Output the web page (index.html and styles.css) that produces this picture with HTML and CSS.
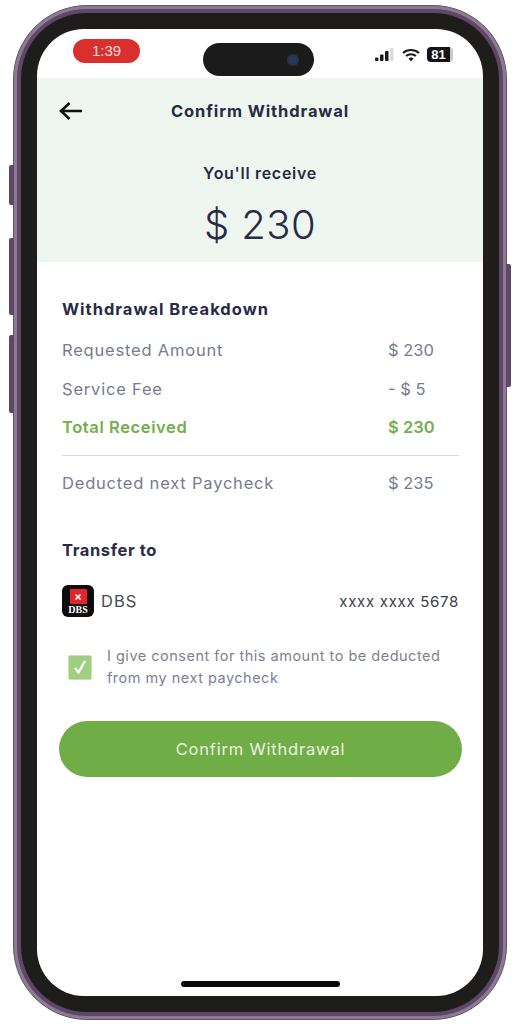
FILE: index.html
```html
<!DOCTYPE html>
<html lang="en">
<head>
    <meta charset="UTF-8">
    <meta name="viewport" content="width=device-width, initial-scale=1.0">
    <title>Confirm Withdrawal</title>
    <link rel="stylesheet" href="styles.css">
</head>
<body>
    <div class="phone">
        <span class="side-btn side-btn-mute"></span>
        <span class="side-btn side-btn-up"></span>
        <span class="side-btn side-btn-down"></span>
        <span class="side-btn side-btn-power"></span>
        <div class="phone-band">
            <div class="bezel">
                <div class="screen">
                    <div class="status-bar">
                        <span class="time-pill">1:39</span>
                        <div class="island"><span class="camera"></span></div>
                        <div class="status-icons">
                            <svg width="20" height="14" viewBox="0 0 20 14">
                                <rect x="0" y="9.500" width="3.500" height="3.500" rx="1" fill="#1b1b1b"/>
                                <rect x="5" y="6.500" width="3.500" height="6.500" rx="1" fill="#1b1b1b"/>
                                <rect x="10" y="3" width="3.500" height="10" rx="1" fill="#1b1b1b"/>
                                <rect x="15" y="0" width="3.500" height="13" rx="1" fill="#dcdcdc"/>
                            </svg>
                            <svg width="18" height="14" viewBox="0 0 18 14">
                                <path d="M1 5 C5.500 1 12.500 1 17 5" fill="none" stroke="#1b1b1b" stroke-width="2"/>
                                <path d="M4 8 C6.800 5.600 11.200 5.600 14 8" fill="none" stroke="#1b1b1b" stroke-width="2"/>
                                <path d="M6.500 10.500 L9 13.500 L11.500 10.500 C10 9.300 8 9.300 6.500 10.500 Z" fill="#1b1b1b"/>
                            </svg>
                            <span class="battery">81</span>
                        </div>
                    </div>

                    <div class="summary">
                        <div class="nav-row">
                            <svg class="back-arrow" width="24" height="20" viewBox="0 0 24 20">
                                <path d="M23 10 H2 M10.500 2 L2 10 L10.500 18" fill="none" stroke="#111" stroke-width="2.600"/>
                            </svg>
                            <h1>Confirm Withdrawal</h1>
                        </div>
                        <p class="receive-label">You'll receive</p>
                        <p class="receive-amount">$ 230</p>
                    </div>

                    <div class="content">
                        <h2>Withdrawal Breakdown</h2>
                        <div class="breakdown">
                            <div class="row"><span class="row-label">Requested Amount</span><span>$ 230</span></div>
                            <div class="row"><span class="row-label">Service Fee</span><span>- $ 5</span></div>
                            <div class="row row-total"><span class="row-label">Total Received</span><span>$ 230</span></div>
                        </div>
                        <div class="row row-deducted"><span class="row-label">Deducted next Paycheck</span><span>$ 235</span></div>

                        <h2 class="transfer-title">Transfer to</h2>
                        <div class="bank-row">
                            <div class="bank-logo">
                                <span class="bank-mark">
                                    <svg width="10" height="10" viewBox="0 0 12 12">
                                        <path d="M3 3 L9 9 M9 3 L3 9" stroke="#fff" stroke-width="2"/>
                                    </svg>
                                </span>
                                <span class="bank-logo-text">DBS</span>
                            </div>
                            <span class="bank-name">DBS</span>
                            <span class="bank-account">xxxx xxxx 5678</span>
                        </div>

                        <div class="consent">
                            <span class="checkbox">
                                <svg width="14" height="16" viewBox="0 0 14 16">
                                    <path d="M2 9 L5.500 13.500 L12 2" fill="none" stroke="#fff" stroke-width="2.200"/>
                                </svg>
                            </span>
                            <p>I give consent for this amount to be deducted from my next paycheck</p>
                        </div>

                        <button class="confirm-btn">Confirm Withdrawal</button>
                    </div>

                    <div class="home-bar"></div>
                </div>
            </div>
        </div>
    </div>
</body>
</html>
```

FILE: styles.css
```css
* {
    box-sizing: border-box;
}

body {
    font-family: Inter, "Open Sans", sans-serif;
    margin: 0;
    padding: 5px 13px 4px;
    background-color: #fff;
    color: #272b45;
}

/* Phone frame */
.phone {
    position: relative;
    height: 1015px;
    padding: 3px;
    background-color: #8b7b92;
    border: 1px solid #66536c;
    border-radius: 74px;
}

.phone-band {
    height: 100%;
    padding: 4px;
    background-color: #5f4766;
    border-radius: 70px;
}

.bezel {
    height: 100%;
    padding: 16px;
    background-color: #1f1d1c;
    border-radius: 66px;
}

.screen {
    position: relative;
    display: flex;
    flex-direction: column;
    height: 100%;
    overflow: hidden;
    background-color: #fff;
    border-radius: 47px;
}

.side-btn {
    position: absolute;
    width: 5px;
    background-color: #5f4766;
}

.side-btn-mute {
    left: -5px;
    top: 159px;
    height: 40px;
    border-radius: 2px 0 0 2px;
}

.side-btn-up {
    left: -5px;
    top: 232px;
    height: 77px;
    border-radius: 2px 0 0 2px;
}

.side-btn-down {
    left: -5px;
    top: 329px;
    height: 78px;
    border-radius: 2px 0 0 2px;
}

.side-btn-power {
    right: -5px;
    top: 258px;
    height: 123px;
    border-radius: 0 2px 2px 0;
}

/* Status bar */
.status-bar {
    position: relative;
    display: flex;
    justify-content: space-between;
    align-items: flex-start;
    flex-shrink: 0;
    height: 49px;
    padding: 10px 30px 0 36px;
}

.time-pill {
    width: 67px;
    height: 24px;
    background-color: #d9302e;
    border-radius: 12px;
    color: #f6dcdc;
    font-family: "Liberation Sans", sans-serif;
    font-size: 15px;
    line-height: 24px;
    text-align: center;
}

.island {
    position: absolute;
    left: 166px;
    top: 14px;
    width: 111px;
    height: 33px;
    background-color: #1c1b1b;
    border-radius: 17px;
}

.camera {
    position: absolute;
    right: 15px;
    top: 11px;
    width: 12px;
    height: 12px;
    background-color: #26356a;
    border: 2px solid #33343a;
    border-radius: 50%;
}

.status-icons {
    display: flex;
    align-items: center;
    gap: 7px;
    margin-top: 8px;
}

.battery {
    width: 26px;
    height: 15px;
    padding-right: 3px;
    background: linear-gradient(to right, #141414 23px, #c9c9c9 23px);
    border-radius: 4px;
    color: #fff;
    font-family: "Liberation Sans", sans-serif;
    font-size: 13px;
    font-weight: 700;
    line-height: 15px;
    text-align: center;
}

/* Green summary */
.summary {
    flex-shrink: 0;
    height: 184px;
    padding-top: 22px;
    background-color: #eff5ef;
    text-align: center;
}

.nav-row {
    position: relative;
    height: 22px;
}

.back-arrow {
    position: absolute;
    left: 22px;
    top: 1px;
}

h1 {
    margin: 0;
    font-size: 16.500px;
    font-weight: 700;
    letter-spacing: 0.9px;
    line-height: 22px;
}

.receive-label {
    margin: 39px 0 0;
    font-size: 16px;
    font-weight: 600;
    letter-spacing: 0.7px;
    line-height: 24px;
}

.receive-amount {
    margin: 16px 0 0;
    font-size: 40px;
    font-weight: 300;
    letter-spacing: 0.4px;
    line-height: 48px;
}

/* Details */
.content {
    padding: 36px 24px 0 25px;
}

h2 {
    margin: 0;
    font-size: 16.500px;
    font-weight: 700;
    letter-spacing: 1px;
    line-height: 22px;
}

.breakdown {
    display: flex;
    flex-direction: column;
    gap: 16.500px;
    margin-top: 19px;
    padding-bottom: 17px;
    border-bottom: 1px solid #d9dbe0;
}

.row {
    display: grid;
    grid-template-columns: 1fr 71px;
    color: #767c92;
    font-size: 16.500px;
    line-height: 22px;
}

.row-label {
    letter-spacing: 0.8px;
}

.row-total {
    color: #73ae4c;
    font-weight: 600;
}

.row-total .row-label {
    letter-spacing: 0.6px;
}

.row-deducted {
    margin-top: 16px;
}

.transfer-title {
    margin-top: 45px;
    letter-spacing: 0.6px;
}

.bank-row {
    display: flex;
    align-items: center;
    margin-top: 24px;
}

.bank-logo {
    display: flex;
    flex-direction: column;
    align-items: center;
    width: 32px;
    height: 32px;
    padding-top: 4px;
    background-color: #0c0c0c;
    border-radius: 6px;
}

.bank-mark {
    display: flex;
    justify-content: center;
    align-items: center;
    width: 17px;
    height: 15px;
    background-color: #e0262c;
}

.bank-logo-text {
    color: #fff;
    font-family: "Liberation Serif", serif;
    font-size: 10px;
    font-weight: 700;
    line-height: 11px;
}

.bank-name {
    margin-left: 7px;
    color: #4a4c55;
    font-size: 16.500px;
    letter-spacing: 1px;
}

.bank-account {
    margin-left: auto;
    color: #3b3d48;
    font-size: 15px;
    letter-spacing: 0.7px;
}

.consent {
    display: flex;
    align-items: center;
    gap: 15px;
    margin-top: 28px;
    padding-left: 6px;
}

.checkbox {
    display: flex;
    flex-shrink: 0;
    justify-content: center;
    align-items: center;
    width: 24px;
    height: 25px;
    background-color: #a0d07f;
    border: 1px solid #c5e2b2;
    border-radius: 2px;
}

.consent p {
    margin: 0;
    color: #7c8194;
    font-size: 14.500px;
    letter-spacing: 0.5px;
    line-height: 22px;
}

.confirm-btn {
    display: block;
    width: 403px;
    height: 56px;
    margin: 32px 0 0 -3px;
    background-color: #70ad47;
    border: none;
    border-radius: 28px;
    color: #e9f3e2;
    font-family: inherit;
    font-size: 16.500px;
    font-weight: 400;
    letter-spacing: 0.8px;
}

.home-bar {
    position: absolute;
    left: 144px;
    bottom: 9px;
    width: 159px;
    height: 6px;
    background-color: #0a0a0a;
    border-radius: 3px;
}
```
